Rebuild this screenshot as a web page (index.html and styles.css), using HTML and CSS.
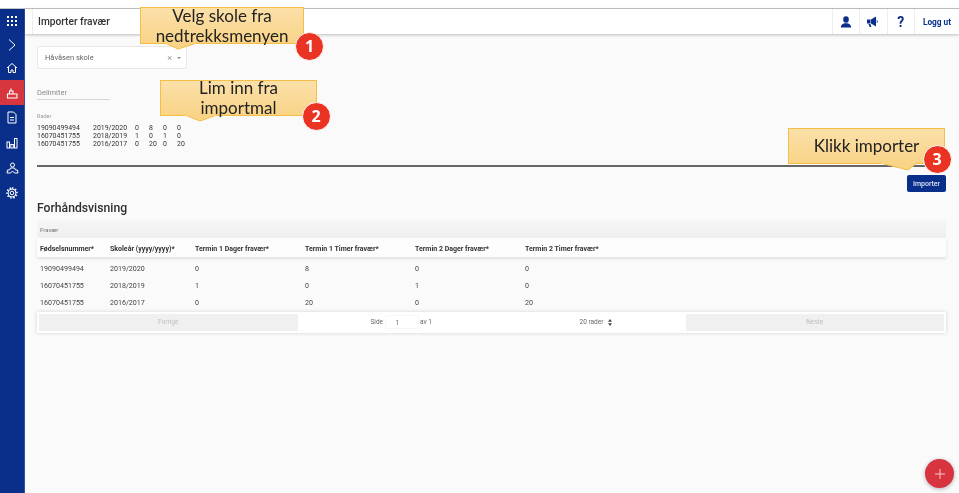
FILE: index.html
```html
<!DOCTYPE html>
<html lang="no">
<head>
<meta charset="utf-8">
<title>Importer fravær</title>
<link rel="stylesheet" href="styles.css">
</head>
<body>
<div class="app">
  <nav class="sidebar">
    <a class="nav-item"><svg width="12" height="12" viewBox="0 0 12 12" fill="#fff"><rect x="1" y="1" width="2" height="2"/><rect x="5" y="1" width="2" height="2"/><rect x="9" y="1" width="2" height="2"/><rect x="1" y="5" width="2" height="2"/><rect x="5" y="5" width="2" height="2"/><rect x="9" y="5" width="2" height="2"/><rect x="1" y="9" width="2" height="2"/><rect x="5" y="9" width="2" height="2"/><rect x="9" y="9" width="2" height="2"/></svg></a>
    <a class="nav-item"><svg width="12" height="14" viewBox="0 0 12 14" fill="none" stroke="#fff"><path d="M3 1.500 9 7l-6 5.500"/></svg></a>
    <a class="nav-item"><svg width="12" height="12" viewBox="0 0 12 12" fill="none" stroke="#fff"><path d="M1 6 6 1.500 11 6M2.500 5v5.500h2.500V8h2v2.500h2.500V5"/></svg></a>
    <a class="nav-item active"><svg width="12" height="12" viewBox="0 0 12 12" fill="none" stroke="#fff" stroke-width="1.100"><path d="M1.500 7h9.500v4H1.500zM3.500 7V4h3.500v3M5 4V1.500"/></svg></a>
    <a class="nav-item"><svg width="12" height="13" viewBox="0 0 12 13" fill="none" stroke="#fff"><path d="M2 1h5.500L10 3.500V12H2z"/><path d="M4 6.500h4M4 9h4"/></svg></a>
    <a class="nav-item"><svg width="12" height="12" viewBox="0 0 12 12" fill="none" stroke="#fff"><rect x="1" y="5" width="2.500" height="6"/><rect x="4.800" y="7.500" width="2.500" height="3.500"/><rect x="8.500" y="1.500" width="2.500" height="9.500"/></svg></a>
    <a class="nav-item"><svg width="13" height="12" viewBox="0 0 13 12" fill="none" stroke="#fff"><circle cx="6.500" cy="3" r="2"/><path d="M4.500 6h4L9.500 8h2l.5 3H8.500L6.500 9 4.500 11H1l.5-3h2z"/></svg></a>
    <a class="nav-item"><svg width="12" height="12" viewBox="0 0 12 12" fill="none" stroke="#fff"><circle cx="6" cy="6" r="1.800"/><circle cx="6" cy="6" r="4"/><path stroke-width="1.500" stroke-dasharray="1.500 1.640" d="M6 1a5 5 0 1 1 0 10A5 5 0 1 1 6 1"/></svg></a>
  </nav>
  <div class="page">
    <header class="topbar">
      <h1 class="title">Importer fravær</h1>
      <div class="actions">
        <a class="action"><svg width="12" height="12" viewBox="0 0 12 12" fill="#0a2f8a"><ellipse cx="6" cy="3.500" rx="2.800" ry="3.300"/><path d="M.8 11.500c0-2.800 2-3.600 3.700-4.300h3c1.700.7 3.700 1.500 3.700 4.300z"/></svg></a>
        <a class="action"><svg width="12" height="11" viewBox="0 0 12 11" fill="#0a2f8a"><path d="M0 3.500h3.500V7.500H0zM4 3.500 9 .5v10L4 7.500zM9.800 3.800a2 2 0 0 1 0 3.400zM1.500 8h2l.8 3h-1.700z"/></svg></a>
        <a class="action help">?</a>
        <a class="action logout">Logg ut</a>
      </div>
    </header>
    <main class="content">
      <div class="school-select">
        <span class="school-name">Håvåsen skole</span>
        <span class="clear">×</span>
        <span class="caret"></span>
      </div>
      <div class="delimiter">Delimiter</div>
      <div class="rows-label">Rader</div>
      <pre class="rows-text">19090499494	2019/2020	0	8	0	0
16070451755	2018/2019	1	0	1	0
16070451755	2016/2017	0	20	0	20</pre>
      <hr class="rule">
      <div class="button-row"><button class="import-btn">Importer</button></div>
      <h2 class="preview-title">Forhåndsvisning</h2>
      <section class="table">
        <div class="group-head">Fravær</div>
        <div class="row head">
          <span>Fødselsnummer*</span><span>Skoleår (yyyy/yyyy)*</span><span>Termin 1 Dager fravær*</span><span>Termin 1 Timer fravær*</span><span>Termin 2 Dager fravær*</span><span>Termin 2 Timer fravær*</span>
        </div>
        <div class="body">
          <div class="row"><span>19090499494</span><span>2019/2020</span><span>0</span><span>8</span><span>0</span><span>0</span></div>
          <div class="row"><span>16070451755</span><span>2018/2019</span><span>1</span><span>0</span><span>1</span><span>0</span></div>
          <div class="row"><span>16070451755</span><span>2016/2017</span><span>0</span><span>20</span><span>0</span><span>20</span></div>
        </div>
        <div class="pager">
          <div class="pager-btn">Forrige</div>
          <div class="pager-mid">
            <div class="page-jump"><span>Side</span><span class="page-input">1</span><span>av 1</span></div>
            <div class="page-size">20 rader <svg width="4" height="7" viewBox="0 0 4 7" fill="#444"><path d="M2 0 4 2.800H0zM2 7 0 4.200h4z"/></svg></div>
          </div>
          <div class="pager-btn">Neste</div>
        </div>
      </section>
    </main>
  </div>
</div>

<div class="callout c1"><span>Velg skole fra<br>nedtrekksmenyen</span><svg class="tail t1" width="32" height="7" viewBox="0 0 32 7"><path d="M0 0 13 6 32 0z" fill="#f9d488" stroke="#f5bf45"/><path d="M1 0h30" stroke="#f9d488" stroke-width="2"/></svg></div>
<div class="badge b1">1</div>
<div class="callout c2"><span>Lim inn fra<br>importmal</span><svg class="tail t2" width="32" height="7" viewBox="0 0 32 7"><path d="M0 0 15 6 32 0z" fill="#f9d488" stroke="#f5bf45"/><path d="M1 0h30" stroke="#f9d488" stroke-width="2"/></svg></div>
<div class="badge b2">2</div>
<div class="callout c3"><span>Klikk importer</span><svg class="tail t3" width="37" height="8" viewBox="0 0 37 8"><path d="M0 0 28 7 37 0z" fill="#f9d488" stroke="#f5bf45"/><path d="M1 0h35" stroke="#f9d488" stroke-width="2"/></svg></div>
<div class="badge b3">3</div>
<button class="fab" aria-label="Legg til"><svg width="10" height="10" viewBox="0 0 10 10" stroke="#f6c9cc" stroke-width="1"><path d="M5 0v10M0 5h10"/></svg></button>
</body>
</html>
```
FILE: styles.css
```css
* { box-sizing: border-box; }
html, body { margin: 0; height: 493px; overflow: hidden; background: #fff; }
body {
  position: relative;
  font-family: Roboto, "Liberation Sans", sans-serif;
  color: #3a3a3a;
  padding-top: 8px;
  filter: blur(0.35px);
}
.app {
  display: flex;
  height: 485px;
  border-top: 1px solid #c4c4c4;
}
.sidebar {
  width: 25px;
  flex: none;
  background: #0a2f8a;
  border-right: 1px solid #2f50a0;
  display: flex;
  flex-direction: column;
}
.nav-item {
  height: 25px;
  display: flex;
  align-items: center;
  justify-content: center;
}
.nav-item:nth-child(1), .nav-item:nth-child(3) { height: 24px; }
.nav-item:nth-child(2) { height: 23px; }
.nav-item.active { background: #d8363f; }
.page { flex: 1; display: flex; flex-direction: column; background: #fafafa; min-width: 0; }
.topbar {
  height: 25px;
  flex: none;
  background: #fff;
  box-shadow: 0 1px 3px rgba(0,0,0,.25);
  display: flex;
  justify-content: space-between;
  align-items: stretch;
  padding-left: 7px;
  position: relative;
}
.title {
  margin: 0;
  padding-left: 5px;
  border-left: 1px solid #eee;
  font-size: 10.200px;
  font-weight: 500;
  line-height: 25px;
  color: #333;
}
.actions { display: flex; }
.action {
  width: 27.500px;
  border-left: 1px solid #eee;
  display: flex;
  align-items: center;
  justify-content: center;
  color: #0a2f8a;
}
.help { font-size: 14px; font-weight: 700; }
.logout { width: 45px; font-size: 8.300px; font-weight: 700; }
.content { padding: 12px 13px 0 12px; }
.school-select {
  width: 150px;
  height: 23px;
  background: #fff;
  border: 1px solid #e6e6e6;
  border-radius: 2px;
  display: flex;
  align-items: center;
  padding: 0 5px 0 7px;
  font-size: 7.500px;
  color: #666;
}
.school-name { flex: 1; }
.clear { font-size: 9px; color: #999; margin-right: 5px; }
.caret { width: 0; height: 0; border: 2.500px solid transparent; border-top-color: #888; border-bottom: 0; }
.delimiter {
  width: 73px;
  margin-top: 18px;
  height: 13px;
  border-bottom: 1.500px solid #d5d5d5;
  font-size: 7.500px;
  line-height: 11px;
  color: #8a8a8a;
}
.rows-label { margin-top: 12px; font-size: 5.500px; line-height: 8px; color: #999; }
.rows-text {
  margin: 4px 0 0;
  font-family: Roboto, "Liberation Sans", sans-serif;
  font-size: 6.950px;
  line-height: 8px;
  tab-size: 14px;
  color: #333;
}
.rule { margin: 17px 0 0; border: 0; height: 2px; background: #666; }
.button-row { display: flex; justify-content: flex-end; margin-top: 8px; }
.import-btn {
  width: 39px;
  height: 17px;
  padding: 0;
  background: #0a2f8a;
  border: 0;
  border-radius: 2px;
  color: #dfe5f3;
  font: 500 7px Roboto, sans-serif;
}
.preview-title { margin: 8px 0 0; font-size: 12.200px; line-height: 16px; font-weight: 500; color: #2e2e2e; }
.table { margin-top: 4px; }
.group-head {
  height: 18px;
  background: linear-gradient(#f6f6f6, #efefef);
  padding-left: 3px;
  font-size: 6px;
  line-height: 19px;
  color: #777;
}
.row {
  display: grid;
  grid-template-columns: 70px 85px 110px 110px 110px 1fr;
  padding-left: 3px;
  height: 17px;
  align-items: center;
  font-size: 7.100px;
  color: #444;
}
.row.head {
  height: 19px;
  padding-top: 3px;
  background: #fdfdfd;
  box-shadow: 0 2px 3px rgba(0,0,0,.1);
  font-weight: 700;
  font-size: 7px;
  color: #333;
  position: relative;
}
.body { padding: 3px 0 .5px; }
.pager {
  height: 21px;
  background: #fff;
  box-shadow: 0 0 4px rgba(0,0,0,.16);
  padding: 2px;
  display: flex;
  font-size: 6.500px;
}
.pager-btn {
  width: 258.500px;
  background: #f0f0f0;
  display: flex;
  align-items: center;
  justify-content: center;
  color: #bdbdbd;
}
.pager-mid {
  flex: 1;
  display: flex;
  justify-content: space-between;
  align-items: center;
  padding: 0 73px;
  color: #666;
}
.page-jump { display: flex; align-items: center; gap: 1.500px; }
.page-input {
  width: 34px;
  height: 14px;
  line-height: 14px;
  padding-left: 10px;
  background: #fff;
  border: 1px solid #f6f6f6;
  border-radius: 2px;
}
.page-size { display: flex; align-items: center; justify-content: space-between; width: 37px; padding: 0 1px 0 4px; height: 13px; white-space: nowrap; }
.callout {
  position: absolute;
  display: flex;
  align-items: center;
  justify-content: center;
  background: linear-gradient(#fbe0a9, #f9d488);
  border: 1px solid #f5bf45;
  text-align: center;
  font-family: Lato, "Noto Sans", sans-serif;
  color: #222;
  font-size: 17px;
  line-height: 20px;
}
.tail { position: absolute; display: block; top: 100%; overflow: visible; }
.c1 { left: 140px; top: 7px; width: 164px; height: 37px; }
.t1 { left: 24px; }
.c2 { left: 160px; top: 80px; width: 157px; height: 36px; }
.t2 { left: 24px; }
.c3 { left: 788px; top: 128px; width: 157px; height: 36px; }
.t3 { left: 91px; }
.badge {
  position: absolute;
  width: 29px;
  height: 29px;
  border-radius: 50%;
  background: #ea3323;
  border: 1px solid #fff;
  color: #fff;
  font: 700 16px/27px "Noto Sans", sans-serif;
  text-align: center;
}
.b1 { left: 295px; top: 31.500px; }
.b2 { left: 301.500px; top: 102px; }
.b3 { left: 922.500px; top: 145px; }
.fab {
  position: absolute;
  left: 925px;
  top: 459px;
  width: 29px;
  height: 29px;
  padding: 0;
  border: 0;
  border-radius: 50%;
  background: #d8343f;
  box-shadow: 0 1px 4px rgba(0,0,0,.3);
  display: flex;
  align-items: center;
  justify-content: center;
}
```
